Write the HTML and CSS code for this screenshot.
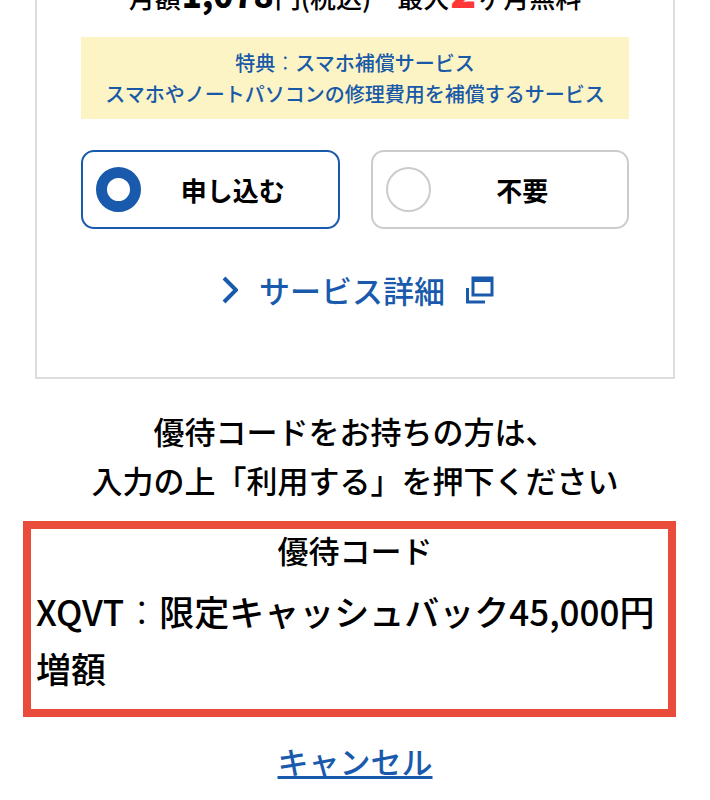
FILE: index.html
```html
<!DOCTYPE html>
<html lang="ja">
<head>
  <meta charset="UTF-8">
  <meta name="viewport" content="width=device-width, initial-scale=1.0">
  <title>優待コード</title>
  <link rel="stylesheet" href="styles.css">
</head>
<body>
  <main class="page">
    <section class="option">
      <p class="price">月額<strong>1,078</strong>円(税込)　最大<strong class="red">2</strong>ヶ月無料</p>
      <div class="benefit">
        <p>特典<span class="colon">：</span>スマホ補償サービス</p>
        <p>スマホやノートパソコンの修理費用を補償するサービス</p>
      </div>
      <div class="choices">
        <label class="choice">
          <input type="radio" name="apply" value="yes" checked>
          <span>申し込む</span>
        </label>
        <label class="choice">
          <input type="radio" name="apply" value="no">
          <span>不要</span>
        </label>
      </div>
      <a class="detail" href="#">
        <svg class="arrow" viewBox="0 0 16 28"><path d="M2 2l12 12L2 26"/></svg>
        <span>サービス詳細</span>
        <svg class="window" viewBox="0 0 28 28">
          <path d="M7 2h19v17H7zM7 4.5h19M1.5 12v14H19"/>
        </svg>
      </a>
    </section>

    <p class="guide">優待コードをお持ちの方は、<br>入力の上「利用する」を押下ください</p>

    <section class="code">
      <h2>優待コード</h2>
      <p>XQVT<span class="colon">：</span>限定キャッシュバック45,000円増額</p>
    </section>

    <a class="cancel" href="#">キャンセル</a>
  </main>
</body>
</html>
```

FILE: styles.css
```css
* {
  box-sizing: border-box;
}
body {
  margin: 0;
  background-color: #fff;
  color: #000;
  font-family: "Noto Sans CJK JP", sans-serif;
  font-weight: 500;
}
p, h2 {
  margin: 0;
}
.page {
  text-align: center;
}
.option {
  margin: 0 35px;
  padding: 0 44px 63px;
  border: 2px solid #ddd;
  border-top: none;
}
.price {
  margin-top: -23px;
  font-size: 26px;
  line-height: 40px;
  white-space: nowrap;
}
.price strong {
  margin: 0 1px;
  font-size: 33px;
  font-weight: 900;
  line-height: 20px;
}
.price .red {
  color: #ff3638;
  font-size: 43px;
}
.benefit {
  margin-top: 20px;
  padding: 10px 0;
  background-color: #fdf4c5;
  color: #195aa8;
  font-size: 20px;
  line-height: 31px;
}
.colon {
  font-weight: 300;
}
.choices {
  display: flex;
  gap: 31px;
  margin-top: 31px;
}
.choice {
  display: flex;
  flex: 1;
  align-items: center;
  height: 79px;
  padding: 0 13px;
  border: 2px solid #ccc;
  border-radius: 13px;
  font-size: 26px;
  font-weight: 700;
  cursor: pointer;
}
.choice:has(input:checked) {
  border-color: #195aad;
}
.choice input {
  appearance: none;
  width: 45px;
  height: 45px;
  margin: 0;
  border: 2px solid #ccc;
  border-radius: 50%;
}
.choice input:checked {
  border: 11px solid #195aad;
}
.choice span {
  flex: 1;
}
.detail {
  display: flex;
  justify-content: center;
  align-items: center;
  gap: 21px;
  margin-top: 37px;
  padding-left: 6px;
  color: #195aad;
  font-size: 31px;
  line-height: 48px;
  text-decoration: none;
}
.detail svg {
  fill: none;
  stroke: currentColor;
}
.arrow {
  width: 16px;
  height: 28px;
  stroke-width: 4;
}
.window {
  width: 28px;
  height: 28px;
  stroke-width: 3;
}
.guide {
  margin-top: 27px;
  font-size: 31px;
  line-height: 49px;
}
.code {
  margin: 17px 34px 0 23px;
  padding: 0 5px;
  border: 8px solid #ea4c3b;
}
.code h2 {
  padding-left: 11px;
  font-size: 31px;
  font-weight: 500;
  line-height: 42px;
}
.code p {
  padding: 11px 0 13px;
  font-size: 35px;
  line-height: 57px;
  text-align: left;
}
.cancel {
  display: inline-block;
  margin-top: 21px;
  color: #195aad;
  font-size: 31px;
  line-height: 46px;
}
```
